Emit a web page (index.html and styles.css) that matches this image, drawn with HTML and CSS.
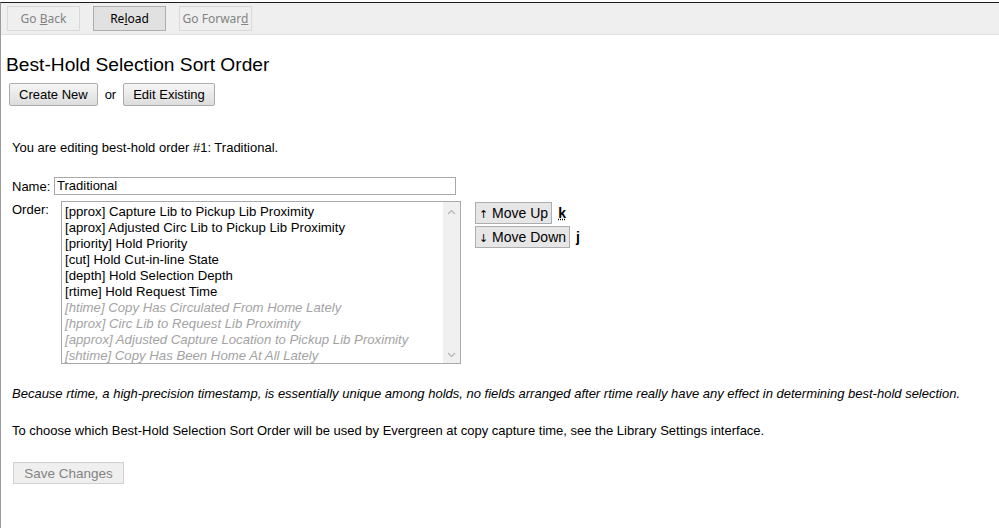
FILE: index.html
```html
<!DOCTYPE html>
<html>
<head>
<meta charset="utf-8">
<title>Best-Hold Selection Sort Order</title>
<link rel="stylesheet" href="styles.css">
</head>
<body>
<div class="window">
  <div class="toolbar">
    <button class="tb-btn disabled">Go <u>B</u>ack</button>
    <button class="tb-btn">Re<u>l</u>oad</button>
    <button class="tb-btn disabled">Go Forwar<u>d</u></button>
  </div>
  <div class="content">
    <h1 class="title">Best-Hold Selection Sort Order</h1>
    <div class="actions">
      <button class="btn">Create New</button>
      <span class="or">or</span>
      <button class="btn">Edit Existing</button>
    </div>
    <p class="editing">You are editing best-hold order #1: Traditional.</p>
    <div class="name-row">
      <label class="lbl">Name:</label>
      <div class="input">Traditional</div>
    </div>
    <div class="order-row">
      <label class="lbl order-lbl">Order:</label>
      <div class="listbox">
        <div class="items">
          <div class="item">[pprox] Capture Lib to Pickup Lib Proximity</div>
          <div class="item">[aprox] Adjusted Circ Lib to Pickup Lib Proximity</div>
          <div class="item">[priority] Hold Priority</div>
          <div class="item">[cut] Hold Cut-in-line State</div>
          <div class="item">[depth] Hold Selection Depth</div>
          <div class="item">[rtime] Hold Request Time</div>
          <div class="item off">[htime] Copy Has Circulated From Home Lately</div>
          <div class="item off">[hprox] Circ Lib to Request Lib Proximity</div>
          <div class="item off">[approx] Adjusted Capture Location to Pickup Lib Proximity</div>
          <div class="item off">[shtime] Copy Has Been Home At All Lately</div>
        </div>
        <div class="scroll">
          <svg width="9" height="6" viewBox="0 0 9 6"><path d="M1 5 L4.5 1.5 L8 5" fill="none" stroke="#b5b5b5" stroke-width="1.2"/></svg>
          <svg width="9" height="6" viewBox="0 0 9 6"><path d="M1 1 L4.5 4.5 L8 1" fill="none" stroke="#b5b5b5" stroke-width="1.2"/></svg>
        </div>
      </div>
      <div class="movers">
        <div class="mover"><button class="btn mv"><span class="arrow">↑</span> Move Up</button><span class="key">k</span></div>
        <div class="mover"><button class="btn mv"><span class="arrow">↓</span> Move Down</button><span class="key">j</span></div>
      </div>
    </div>
    <p class="note">Because rtime, a high-precision timestamp, is essentially unique among holds, no fields arranged after rtime really have any effect in determining best-hold selection.</p>
    <p class="info">To choose which Best-Hold Selection Sort Order will be used by Evergreen at copy capture time, see the Library Settings interface.</p>
    <button class="btn save" disabled>Save Changes</button>
  </div>
</div>
</body>
</html>
```

FILE: styles.css
```css
html, body {
  margin: 0;
  padding: 0;
  background: #fff;
}
.window {
  margin-top: 2px;
  border-top: 1px solid #1c1c1c;
  border-left: 1px solid #9a9a9a;
  min-height: 526px;
  box-sizing: border-box;
  font-family: "Liberation Sans", Arial, sans-serif;
  color: #000;
}
.toolbar {
  background: #efefef;
  border-bottom: 1px solid #dde3e7;
  height: 32px;
  box-sizing: border-box;
  display: flex;
  gap: 13px;
  padding: 3px 0 0 6px;
}
.tb-btn {
  width: 73px;
  height: 25px;
  font-family: "Noto Sans", "Open Sans", sans-serif;
  font-size: 12px;
  color: #000;
  background: #e1e1e1;
  border: 1px solid #adadad;
  border-radius: 0;
  padding: 0;
}
.tb-btn.disabled {
  background: #efefef;
  border-color: #d9d9d9;
  color: #838383;
}
.content {
  padding-left: 5px;
}
.title {
  font-size: 19.2px;
  font-weight: normal;
  line-height: 22px;
  margin: 19px 0 0 0;
}
.actions {
  display: flex;
  align-items: center;
  margin: 7px 0 0 3px;
}
.btn {
  font-family: "Liberation Sans", Arial, sans-serif;
  font-size: 13px;
  color: #000;
  background: linear-gradient(#f6f6f6, #dddddd);
  border: 1px solid #acacac;
  border-radius: 2px;
  height: 23px;
  padding: 0 9px;
}
.or {
  font-size: 13px;
  margin: 0 7px 0 7px;
}
.editing {
  font-size: 13px;
  line-height: 15px;
  margin: 34px 0 0 6px;
}
.name-row {
  display: flex;
  align-items: center;
  margin: 22px 0 0 6px;
}
.lbl {
  font-size: 13px;
  width: 42px;
}
.input {
  width: 402px;
  height: 18px;
  box-sizing: border-box;
  border: 1px solid #a9a9a9;
  font-size: 13px;
  line-height: 16px;
  padding-left: 2px;
}
.order-row {
  display: flex;
  align-items: flex-start;
  margin: 6px 0 0 6px;
}
.order-lbl {
  width: 49px;
  padding-top: 1px;
}
.listbox {
  width: 400px;
  height: 163px;
  box-sizing: border-box;
  border: 1px solid #a9a9a9;
  display: flex;
  overflow: hidden;
}
.items {
  flex: 1;
  padding: 2px 0 0 3px;
  font-size: 13.2px;
  line-height: 16px;
  overflow: hidden;
  white-space: nowrap;
}
.item.off {
  color: #a3a3a3;
  font-style: italic;
}
.scroll {
  width: 17px;
  background: #f0f0f0;
  display: flex;
  flex-direction: column;
  justify-content: space-between;
  align-items: center;
  padding: 7px 0 5px;
}
.movers {
  display: flex;
  flex-direction: column;
  gap: 2px;
  margin: 1px 0 0 14px;
}
.mover {
  display: flex;
  align-items: center;
}
.btn.mv {
  height: 22px;
  padding: 0 3px;
  font-size: 14px;
  background: #e6e6e6;
  border-color: #adadad;
  border-radius: 0;
}
.arrow {
  font-family: "DejaVu Sans", sans-serif;
  font-size: 11px;
  color: #000;
}
.key {
  font-weight: bold;
  font-size: 14px;
  margin-left: 6px;
  text-decoration: underline dotted;
}
.note {
  font-size: 13px;
  font-style: italic;
  line-height: 15px;
  margin: 22px 0 0 6px;
}
.info {
  font-size: 13px;
  line-height: 15px;
  margin: 22px 0 0 6px;
}
.btn.save {
  margin: 24px 0 0 7px;
  width: 111px;
  height: 22px;
  color: #838383;
  background: #efefef;
  border-color: #d1d1d1;
  border-radius: 0;
  font-size: 13.5px;
}
```
